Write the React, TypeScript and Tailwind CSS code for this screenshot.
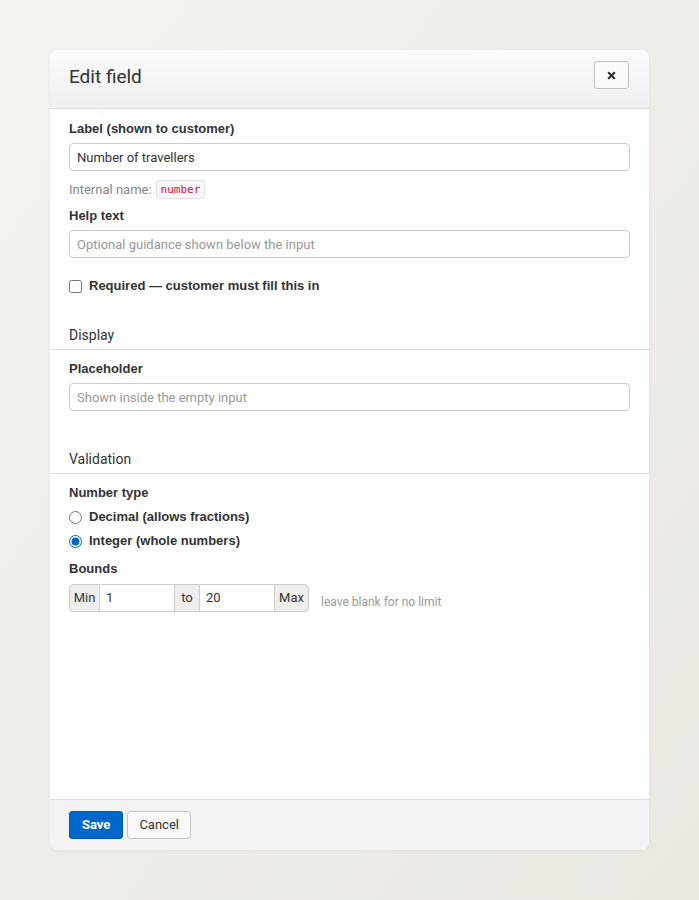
import { X } from "lucide-react";

const font = { fontFamily: "Roboto, 'Liberation Sans', Arial, sans-serif" };
const boldFont = { fontFamily: "'Liberation Sans', Arial, sans-serif" };

function FieldLabel({ children }: { children: React.ReactNode }) {
  return (
    <div className="text-[13px] leading-[18px] font-bold text-[#333]" style={boldFont}>
      {children}
    </div>
  );
}

function SectionHeading({ children }: { children: React.ReactNode }) {
  return (
    <div className="px-[19px] pb-[4px] border-b border-[#dddddd] text-[14px] leading-[20px] text-[#333]">
      {children}
    </div>
  );
}

const inputCls =
  "block w-full h-[28px] px-[7px] rounded-[4px] border border-[#cccccc] bg-white text-[13px] text-[#333] placeholder:text-[#999] outline-none";

export default function App() {
  return (
    <div
      className="min-h-[900px] w-full bg-gradient-to-br from-[#f4f3f0] to-[#ebe8e2] pt-[50px] px-[50px]"
      style={font}
    >
      <div className="w-[599px] h-[800px] flex flex-col bg-white rounded-[8px] shadow-[0_1px_4px_rgba(0,0,0,0.06)] overflow-hidden">
        {/* header */}
        <div className="h-[59px] flex items-start justify-between pl-[19px] pr-[20px] pt-[11px] border-b border-[#dddddd] bg-gradient-to-b from-[#fbfbfb] to-[#efefef]">
          <h2 className="mt-[4px] text-[19px] leading-[24px] text-[#333]">Edit field</h2>
          <button className="w-[35px] h-[28px] flex items-center justify-center rounded-[3px] border border-[#bfbfbf] bg-[#fafafa]">
            <X size={11} strokeWidth={4.5} className="text-[#333]" />
          </button>
        </div>

        {/* body */}
        <div className="flex-1 flex flex-col">
          <div className="px-[19px] pt-[11px]">
            <FieldLabel>Label (shown to customer)</FieldLabel>
            <input className={inputCls + " mt-[5px]"} defaultValue="Number of travellers" />
            <div className="mt-[9px] flex items-center gap-[4px] h-[19px] text-[13px] text-[#888]">
              <span>Internal name:</span>
              <code
                className="px-[4px] h-[19px] leading-[17px] rounded-[3px] border border-[#e1e1e8] bg-[#f7f7f9] text-[11px] text-[#dd1144]"
                style={{ fontFamily: "'DejaVu Sans Mono', 'Liberation Mono', monospace" }}
              >
                number
              </code>
            </div>
            <div className="mt-[8px]">
              <FieldLabel>Help text</FieldLabel>
            </div>
            <input className={inputCls + " mt-[5px]"} placeholder="Optional guidance shown below the input" />
            <label className="mt-[19px] flex items-center gap-[7px] h-[18px]">
              <input type="checkbox" className="w-[13px] h-[13px] m-0 accent-[#0066cc]" />
              <span className="text-[13px] font-bold text-[#333]" style={boldFont}>
                Required — customer must fill this in
              </span>
            </label>
          </div>

          <div className="mt-[30px]">
            <SectionHeading>Display</SectionHeading>
          </div>
          <div className="px-[19px] pt-[10px]">
            <FieldLabel>Placeholder</FieldLabel>
            <input className={inputCls + " mt-[5px]"} placeholder="Shown inside the empty input" />
          </div>

          <div className="mt-[38px]">
            <SectionHeading>Validation</SectionHeading>
          </div>
          <div className="px-[19px] pt-[10px]">
            <FieldLabel>Number type</FieldLabel>
            <label className="mt-[6px] flex items-center gap-[7px] h-[18px]">
              <input type="radio" name="ntype" className="w-[13px] h-[13px] m-0 accent-[#0066cc]" />
              <span className="text-[13px] font-bold text-[#333]" style={boldFont}>
                Decimal (allows fractions)
              </span>
            </label>
            <label className="mt-[6px] flex items-center gap-[7px] h-[18px]">
              <input type="radio" name="ntype" defaultChecked className="w-[13px] h-[13px] m-0 accent-[#0066cc]" />
              <span className="text-[13px] font-bold text-[#333]" style={boldFont}>
                Integer (whole numbers)
              </span>
            </label>
            <div className="mt-[10px]">
              <FieldLabel>Bounds</FieldLabel>
            </div>
            <div className="mt-[6px] flex items-end gap-[12px]">
              <div className="flex h-[28px] text-[13px] text-[#333]">
                <span className="w-[31px] flex items-center justify-center rounded-l-[4px] border border-[#cccccc] bg-[#eeeeee]">Min</span>
                <input className="w-[74px] px-[6px] border-y border-[#cccccc] bg-white outline-none" defaultValue="1" />
                <span className="w-[26px] flex items-center justify-center border border-[#cccccc] bg-[#eeeeee]">to</span>
                <input className="w-[74px] px-[6px] border-y border-[#cccccc] bg-white outline-none" defaultValue="20" />
                <span className="w-[35px] flex items-center justify-center rounded-r-[4px] border border-[#cccccc] bg-[#eeeeee]">Max</span>
              </div>
              <span className="pb-[1px] text-[12px] text-[#999]">leave blank for no limit</span>
            </div>
          </div>
        </div>

        {/* footer */}
        <div className="h-[51px] flex items-start gap-[4px] px-[19px] pt-[11px] border-t border-[#dddddd] bg-[#f3f3f3] shadow-[0_-4px_6px_rgba(0,0,0,0.025)]">
          <button className="h-[28px] px-[12px] rounded-[3px] border border-[#0058b0] bg-[#0068cc] text-[13px] font-bold text-white">
            Save
          </button>
          <button className="h-[28px] px-[11px] rounded-[3px] border border-[#c4c4c4] bg-[#fafafa] text-[13px] text-[#333]">
            Cancel
          </button>
        </div>
      </div>
    </div>
  );
}
